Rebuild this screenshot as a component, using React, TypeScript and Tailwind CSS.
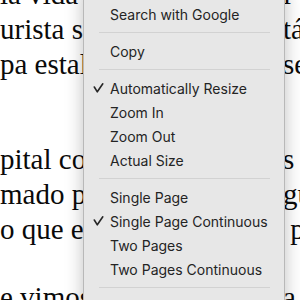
import React from "react";

type Line = { left: string; right: string };

const paragraphs: { lines: Line[]; gap: string }[] = [
  {
    gap: "mb-[60px]",
    lines: [
      { left: "ia vida que", right: "l" },
      { left: "urista se", right: "tá" },
      { left: "pa estal", right: "se" },
    ],
  },
  {
    gap: "mb-[33px]",
    lines: [
      { left: "pital co", right: "s" },
      { left: "mado p", right: "gu" },
      { left: "o que es", right: " p" },
    ],
  },
  {
    gap: "",
    lines: [{ left: "e vimos", right: "a" }],
  },
];

type Item =
  | { kind: "sep" }
  | { kind: "item"; label: string; checked?: boolean };

const menu: Item[] = [
  { kind: "sep" },
  { kind: "item", label: "Search with Google" },
  { kind: "sep" },
  { kind: "item", label: "Copy" },
  { kind: "sep" },
  { kind: "item", label: "Automatically Resize", checked: true },
  { kind: "item", label: "Zoom In" },
  { kind: "item", label: "Zoom Out" },
  { kind: "item", label: "Actual Size" },
  { kind: "sep" },
  { kind: "item", label: "Single Page" },
  { kind: "item", label: "Single Page Continuous", checked: true },
  { kind: "item", label: "Two Pages" },
  { kind: "item", label: "Two Pages Continuous" },
  { kind: "sep" },
  { kind: "item", label: "Next Page" },
];

const Check = () => (
  <svg width="12" height="12" viewBox="0 0 12 12" className="ml-[9px]">
    <path
      d="M1.3 5 L4.3 9.8 L9.8 1.8"
      fill="none"
      stroke="#262626"
      strokeWidth="1.6"
      strokeLinecap="round"
      strokeLinejoin="round"
    />
  </svg>
);

export default function App() {
  return (
    <div className="relative w-[300px] h-[300px] overflow-hidden bg-white">
      {/* Document page */}
      <div className="pt-px">
        <div className="mt-[-24px] font-['Liberation_Serif',serif] text-[29px] leading-[35px] text-[#0a0a0a]">
          {paragraphs.map((p, i) => (
            <div key={i} className={p.gap}>
              {p.lines.map((l, j) => (
                <div key={j} className="grid grid-cols-[283px_1fr] whitespace-pre">
                  <span className="overflow-hidden">{l.left}</span>
                  <span>{l.right}</span>
                </div>
              ))}
            </div>
          ))}
        </div>
      </div>

      {/* Context menu */}
      <div className="absolute left-[83px] top-[-17px] w-[202px] py-[5px] bg-[#e7e7e7] border border-black/20 rounded-md shadow-[0_4px_18px_rgba(0,0,0,0.25)] font-['Inter',sans-serif] text-[14px] text-[#242424]">
        {menu.map((m, i) =>
          m.kind === "sep" ? (
            <div key={i} className="my-[6px] ml-[15px] mr-[14px] h-px bg-[#d2d2d2]" />
          ) : (
            <div key={i} className="flex h-[24px] items-center">
              <div className="w-[26px] shrink-0">{m.checked && <Check />}</div>
              <span>{m.label}</span>
            </div>
          )
        )}
      </div>
    </div>
  );
}
